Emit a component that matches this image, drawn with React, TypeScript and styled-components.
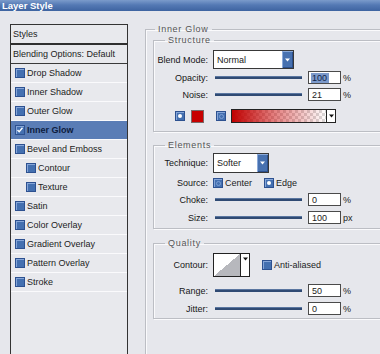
import styled, { createGlobalStyle } from 'styled-components';

const GlobalStyle = createGlobalStyle`
  html, body {
    margin: 0;
    padding: 0;
    background: #e6e7ec;
  }
  body {
    font-family: "Liberation Sans", Arial, sans-serif;
    font-size: 9px;
    color: #1c1c1c;
  }
`;

interface IStyleItem {
  name: string;
  active?: boolean;
  sub?: boolean;
}

const styleItems: IStyleItem[] = [
  { name: 'Drop Shadow' },
  { name: 'Inner Shadow' },
  { name: 'Outer Glow' },
  { name: 'Inner Glow', active: true },
  { name: 'Bevel and Emboss' },
  { name: 'Contour', sub: true },
  { name: 'Texture', sub: true },
  { name: 'Satin' },
  { name: 'Color Overlay' },
  { name: 'Gradient Overlay' },
  { name: 'Pattern Overlay' },
  { name: 'Stroke' },
];

function DownArrow({ color }: { color: string }) {
  return (
    <svg width="5" height="4" viewBox="0 0 5 4">
      <path d="M0 0.5 H5 L2.5 3.5 Z" fill={color} />
    </svg>
  );
}

interface ISliderRowProps {
  label: string;
  value: string;
  unit: string;
  mt: number;
  selected?: boolean;
}

function SliderRow({ label, value, unit, mt, selected }: ISliderRowProps) {
  return (
    <FieldRow $h={13} $mt={mt}>
      <Label>{label}</Label>
      <Track />
      <NumberBox>{selected ? <Selection>{value}</Selection> : value}</NumberBox>
      <Unit>{unit}</Unit>
    </FieldRow>
  );
}

export default function App() {
  return (
    <>
      <GlobalStyle />
      <Window>
        <TitleBar>Layer Style</TitleBar>
        <Main>
          <StyleList>
            <ListHeader>Styles</ListHeader>
            <BlendingRow>Blending Options: Default</BlendingRow>
            {styleItems.map((item) => (
              <StyleItem key={item.name} $active={item.active} $sub={item.sub}>
                <CheckBox>
                  {item.active && (
                    <svg width="8" height="8" viewBox="0 0 8 8">
                      <path d="M1.5 4 L3.2 5.8 L6.5 1.8" stroke="#fff" strokeWidth="1.4" fill="none" />
                    </svg>
                  )}
                </CheckBox>
                {item.name}
              </StyleItem>
            ))}
          </StyleList>

          <Options>
            <OuterGroup>
              <Legend $offset={2}>Inner Glow</Legend>

              <Section $mt={0} $pb={8}>
                <Legend $offset={11}>Structure</Legend>
                <FieldRow $h={19} $mt={4}>
                  <Label>Blend Mode:</Label>
                  <Select $w={81}>
                    <SelectText>Normal</SelectText>
                    <SelectButton>
                      <DownArrow color="#fff" />
                    </SelectButton>
                  </Select>
                </FieldRow>
                <SliderRow label="Opacity:" value="100" unit="%" mt={2} selected />
                <SliderRow label="Noise:" value="21" unit="%" mt={4} />
                <SwatchRow>
                  <CheckBox>
                    <Dot $on />
                  </CheckBox>
                  <ColorSwatch />
                  <CheckBox>
                    <Dot />
                  </CheckBox>
                  <GradientBar />
                  <ArrowBox>
                    <DownArrow color="#111" />
                  </ArrowBox>
                </SwatchRow>
              </Section>

              <Section $mt={8} $pb={4}>
                <Legend $offset={11}>Elements</Legend>
                <FieldRow $h={20} $mt={2}>
                  <Label>Technique:</Label>
                  <Select $w={56}>
                    <SelectText>Softer</SelectText>
                    <SelectButton>
                      <DownArrow color="#fff" />
                    </SelectButton>
                  </Select>
                </FieldRow>
                <FieldRow $h={12} $mt={4}>
                  <Label>Source:</Label>
                  <RadioOption $w={51}>
                    <CheckBox>
                      <Dot />
                    </CheckBox>
                    Center
                  </RadioOption>
                  <RadioOption>
                    <CheckBox>
                      <Dot $on />
                    </CheckBox>
                    Edge
                  </RadioOption>
                </FieldRow>
                <SliderRow label="Choke:" value="0" unit="%" mt={4} />
                <SliderRow label="Size:" value="100" unit="px" mt={5} />
              </Section>

              <Section $mt={9} $pb={3}>
                <Legend $offset={11}>Quality</Legend>
                <FieldRow $h={24} $mt={4}>
                  <Label>Contour:</Label>
                  <ContourPicker>
                    <ContourThumb />
                    <ContourArrow>
                      <DownArrow color="#111" />
                    </ContourArrow>
                  </ContourPicker>
                  <RadioOption $ml={12}>
                    <CheckBox />
                    Anti-aliased
                  </RadioOption>
                </FieldRow>
                <SliderRow label="Range:" value="50" unit="%" mt={7} />
                <SliderRow label="Jitter:" value="0" unit="%" mt={5} />
              </Section>
            </OuterGroup>
          </Options>
        </Main>
      </Window>
    </>
  );
}

const Window = styled.div`
  width: 380px;
  height: 354px;
  overflow: hidden;
  background: #e6e7ec;
`;

const TitleBar = styled.div`
  height: 11px;
  padding-left: 2px;
  line-height: 11px;
  font-size: 9.5px;
  font-weight: bold;
  color: #fff;
  background: linear-gradient(#7b9bcb 0%, #5479b4 45%, #3e64a1 100%);
`;

const Main = styled.div`
  display: flex;
  padding: 13px 0 0 10px;
`;

const StyleList = styled.div`
  width: 118px;
  height: 340px;
  flex-shrink: 0;
  box-sizing: border-box;
  border: 1px solid #333;
  background: #e8e9ed;
`;

const ListHeader = styled.div`
  height: 18px;
  padding-left: 2px;
  display: flex;
  align-items: center;
  border-bottom: 2px solid #2f2f2f;
`;

const BlendingRow = styled(ListHeader)`
  border-bottom: 1px solid #3a3a3a;
`;

const StyleItem = styled.div<{ $active?: boolean; $sub?: boolean }>`
  height: 18px;
  display: flex;
  align-items: center;
  gap: 2px;
  padding-left: ${(p) => (p.$sub ? 15 : 4)}px;
  border-bottom: 1px solid #fafafc;
  background: ${(p) => (p.$active ? '#5a7db6' : 'transparent')};
  color: ${(p) => (p.$active ? '#0d1c3e' : '#1c1c1c')};
  font-weight: ${(p) => (p.$active ? 'bold' : 'normal')};
`;

const CheckBox = styled.span`
  width: 10px;
  height: 10px;
  flex-shrink: 0;
  box-sizing: border-box;
  display: flex;
  align-items: center;
  justify-content: center;
  border: 1px solid #2d5190;
  background: #4470b0;
  box-shadow: inset 1px 1px 0 #86a6d8;
`;

const Dot = styled.span<{ $on?: boolean }>`
  width: ${(p) => (p.$on ? 4 : 5)}px;
  height: ${(p) => (p.$on ? 4 : 5)}px;
  border-radius: 50%;
  box-sizing: border-box;
  background: ${(p) => (p.$on ? '#fff' : 'transparent')};
  border: ${(p) => (p.$on ? 'none' : '1px solid #7d9fd4')};
`;

const Options = styled.div`
  width: 270px;
  margin-left: 17px;
  flex-shrink: 0;
`;

const OuterGroup = styled.fieldset`
  margin: 0;
  padding: 0 0 0 7px;
  min-width: 0;
  height: 400px;
  border: 1px solid #bcbec4;
  box-shadow: 1px 1px 0 #fafafc, inset 1px 1px 0 #fafafc;
`;

const Section = styled.fieldset<{ $mt: number; $pb: number }>`
  margin: ${(p) => p.$mt}px 0 0 0;
  padding: 0 0 ${(p) => p.$pb}px 0;
  min-width: 0;
  border: 1px solid #bcbec4;
  box-shadow: 1px 1px 0 #fafafc, inset 1px 1px 0 #fafafc;
`;

const Legend = styled.legend<{ $offset: number }>`
  margin-left: ${(p) => p.$offset}px;
  padding: 0 3px;
  line-height: 11px;
  color: #555;
  letter-spacing: 0.7px;
`;

const FieldRow = styled.div<{ $h: number; $mt: number }>`
  display: flex;
  align-items: center;
  height: ${(p) => p.$h}px;
  margin-top: ${(p) => p.$mt}px;
`;

const Label = styled.span`
  width: 54px;
  flex-shrink: 0;
  margin-right: 5px;
  text-align: right;
  color: #161616;
`;

const Select = styled.div<{ $w: number }>`
  width: ${(p) => p.$w}px;
  height: 100%;
  box-sizing: border-box;
  display: flex;
  border: 1px solid #383838;
  background: #fff;
`;

const SelectText = styled.span`
  flex: 1;
  display: flex;
  align-items: center;
  padding-left: 3px;
  color: #222;
`;

const SelectButton = styled.span`
  width: 11px;
  display: flex;
  align-items: center;
  justify-content: center;
  background: #4771b0;
  box-shadow: inset 1px 1px 0 #8aa9d9, inset -1px -1px 0 #2c4f8c;
`;

const Track = styled.div`
  width: 87px;
  height: 3px;
  margin-left: 2px;
  background: #2f4a73;
  border-top: 1px solid #5a76a0;
  box-sizing: border-box;
`;

const NumberBox = styled.div`
  width: 33px;
  height: 13px;
  margin-left: 6px;
  box-sizing: border-box;
  padding-left: 3px;
  display: flex;
  align-items: center;
  border: 1px solid #4a4a4a;
  background: #fff;
  color: #222;
`;

const Selection = styled.span`
  padding: 0 2px 0 1px;
  margin-left: -1px;
  background: #7c9acb;
  color: #0f1f48;
`;

const Unit = styled.span`
  margin-left: 2px;
  color: #222;
`;

const SwatchRow = styled.div`
  display: flex;
  align-items: center;
  height: 14px;
  margin-top: 8px;
  padding-left: 21px;
`;

const ColorSwatch = styled.span`
  width: 13px;
  height: 13px;
  margin: 0 12px 0 6px;
  box-sizing: border-box;
  border: 1px solid #7a6a6a;
  background: #c70000;
`;

const GradientBar = styled.span`
  width: 96px;
  height: 14px;
  margin-left: 5px;
  box-sizing: border-box;
  border: 1px solid #222;
  background: linear-gradient(to right, #c00000 0%, rgba(200, 0, 0, 0.5) 45%, rgba(200, 0, 0, 0) 100%),
    repeating-conic-gradient(#d9d9d9 0 25%, #fff 0 50%) 0 0 / 6px 6px;
`;

const ArrowBox = styled.span`
  width: 9px;
  height: 14px;
  box-sizing: border-box;
  display: flex;
  align-items: center;
  justify-content: center;
  border: 1px solid #222;
  border-left: none;
  background: #fff;
`;

const RadioOption = styled.span<{ $w?: number; $ml?: number }>`
  display: flex;
  align-items: center;
  gap: 2px;
  width: ${(p) => (p.$w ? `${p.$w}px` : 'auto')};
  margin-left: ${(p) => p.$ml ?? 0}px;
  color: #1c1c1c;
`;

const ContourPicker = styled.div`
  display: flex;
  height: 24px;
  box-sizing: border-box;
  border: 1px solid #222;
`;

const ContourThumb = styled.span`
  width: 26px;
  background: linear-gradient(to top left, #b7b8bd 50%, #fff 50%);
  border-right: 1px solid #222;
`;

const ContourArrow = styled.span`
  width: 8px;
  display: flex;
  justify-content: center;
  padding-top: 3px;
  background: #fff;
`;
